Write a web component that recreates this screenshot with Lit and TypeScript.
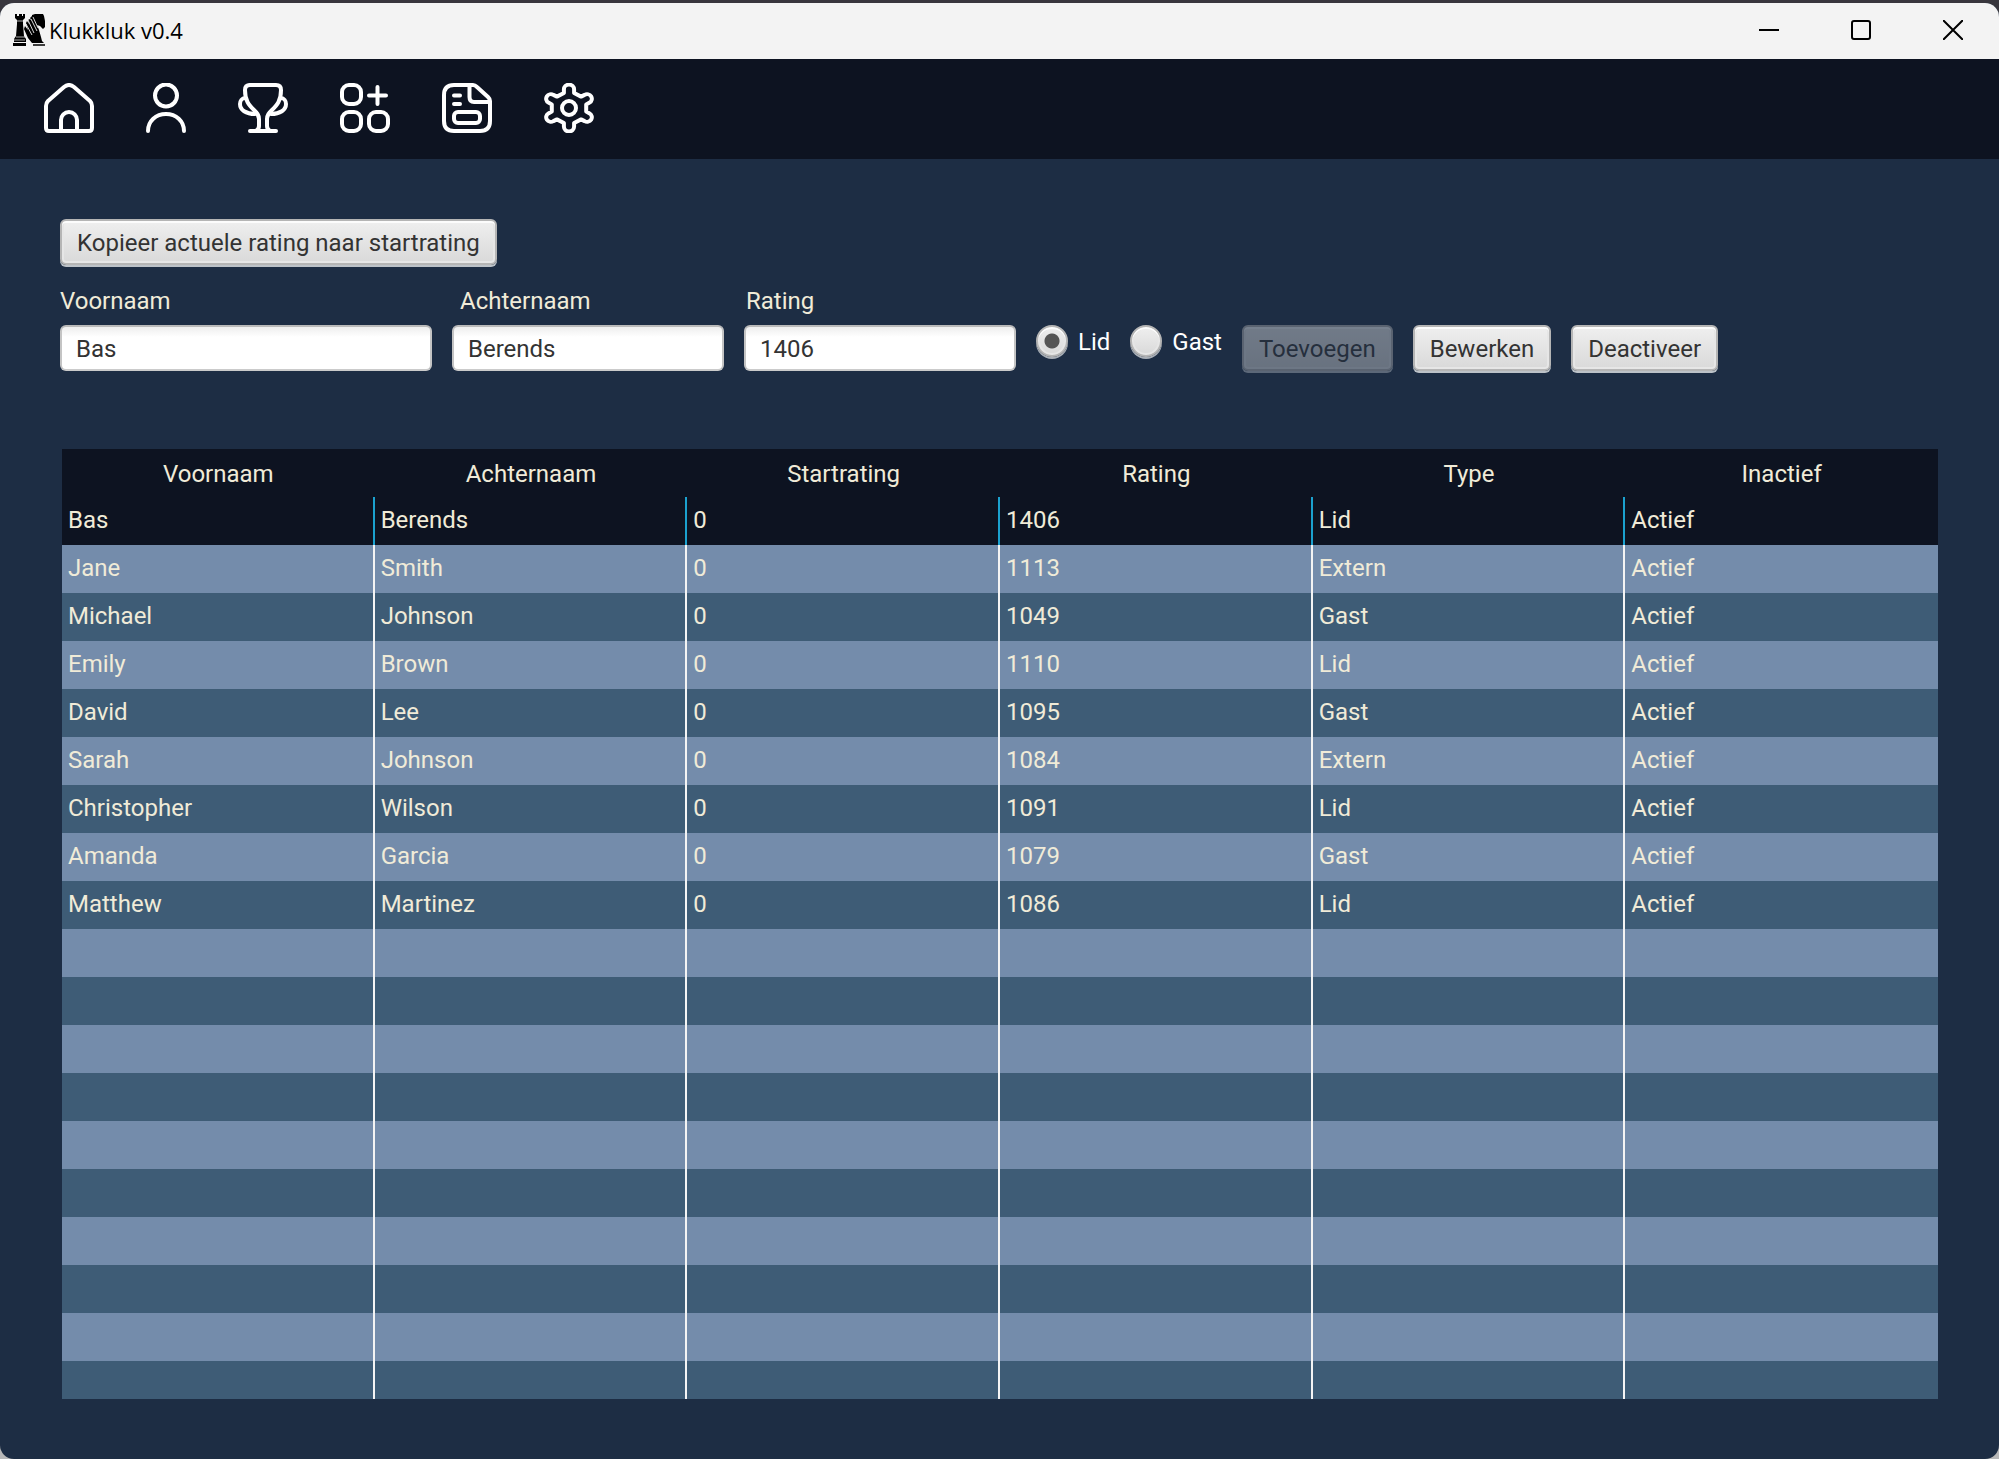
import { LitElement, html, svg, css, nothing } from "lit";
import { customElement, property, state } from "lit/decorators.js";
import { classMap } from "lit/directives/class-map.js";

interface Player {
  first: string;
  last: string;
  start: number;
  rating: number;
  type: string;
  status: string;
}

const player = (first: string, last: string, rating: number, type: string): Player => ({
  first,
  last,
  start: 0,
  rating,
  type,
  status: "Actief",
});

const PLAYERS: Player[] = [
  player("Bas", "Berends", 1406, "Lid"),
  player("Jane", "Smith", 1113, "Extern"),
  player("Michael", "Johnson", 1049, "Gast"),
  player("Emily", "Brown", 1110, "Lid"),
  player("David", "Lee", 1095, "Gast"),
  player("Sarah", "Johnson", 1084, "Extern"),
  player("Christopher", "Wilson", 1091, "Lid"),
  player("Amanda", "Garcia", 1079, "Gast"),
  player("Matthew", "Martinez", 1086, "Lid"),
];

const COLUMNS = ["Voornaam", "Achternaam", "Startrating", "Rating", "Type", "Inactief"];

/** Outline of a six-lobed cog centred on (25, 25). */
function cogPath(): string {
  const turn = (x: number, y: number, i: number) => {
    const a = (i * Math.PI) / 3;
    const px = 25 + 1.13 * (x * Math.cos(a) - y * Math.sin(a));
    const py = 25 + (x * Math.sin(a) + y * Math.cos(a));
    return `${px.toFixed(1)} ${py.toFixed(1)}`;
  };
  let d = "";
  for (let i = 0; i < 6; i++) {
    d += `${i ? "L" : "M"}${turn(-4.5, -15, i)} L${turn(-4.5, -18.5, i)} `;
    d += `A4.7 4.5 0 0 1 ${turn(4.5, -18.5, i)} L${turn(4.5, -15, i)} `;
  }
  return d + "Z";
}

const NAV = [
  {
    label: "Home",
    width: 50,
    art: svg`<path d="M2 45V23Q2 20 4 18L20 4Q25 0 30 4L46 18Q48 20 48 23V45Q48 48 45 48H5Q2 48 2 45Z"/>
      <path d="M17 48V37A8 8 0 0 1 33 37V48"/>`,
  },
  {
    label: "Spelers",
    width: 40,
    art: svg`<circle cx="20" cy="12.500" r="11"/><path d="M2 48C2 38 10 31 20 31S38 38 38 48"/>`,
  },
  {
    label: "Toernooien",
    width: 50,
    art: svg`<path d="M12 2H38Q43 2 43 7C43 18 39 22 34 27C31 30 29 32 29 36V43Q29 46 32 48"/>
      <path d="M12 2Q7 2 7 7C7 18 11 22 16 27C19 30 21 32 21 36V43Q21 46 18 48"/>
      <path d="M12 48H38"/>
      <path d="M7 15C4 15 2 18 2 21C2 27 8 31 17 31M43 15C46 15 48 18 48 21C48 27 42 31 33 31"/>`,
  },
  {
    label: "Groepen",
    width: 50,
    art: svg`<rect x="2" y="2" width="19" height="19" rx="7"/>
      <rect x="2" y="29" width="19" height="19" rx="7"/>
      <rect x="29" y="29" width="19" height="19" rx="7"/>
      <path d="M37.500 4V21M29 12.500H46"/>`,
  },
  {
    label: "Rapporten",
    width: 50,
    art: svg`<path d="M12 2H31Q33 2 35 4L46 14Q48 16 48 18V38Q48 48 38 48H12Q2 48 2 38V12Q2 2 12 2Z"/>
      <path d="M27.500 3V14Q27.500 19 32 19H47"/>
      <path d="M12 12.500H18M12 21H18"/>
      <rect x="12" y="29" width="26" height="11" rx="4"/>`,
  },
  {
    label: "Instellingen",
    width: 50,
    art: svg`<path d=${cogPath()}/><circle cx="25" cy="25" r="7"/>`,
  },
];

@customElement("title-bar")
export class TitleBar extends LitElement {
  static styles = css`
    :host {
      display: flex;
      align-items: stretch;
      box-sizing: border-box;
      height: 56px;
      padding-bottom: 2px;
      background: #f3f3f3;
      color: #000;
      font-family: "Open Sans", "Noto Sans", sans-serif;
    }
    .brand {
      flex: 1;
      display: flex;
      align-items: center;
      gap: 4px;
      padding-left: 13px;
      font-size: 22px;
      line-height: 32px;
    }
    .logo {
      display: block;
      width: 32px;
      height: 32px;
    }
    .control {
      display: grid;
      place-items: center;
      width: 92px;
      padding: 0;
      border: 0;
      background: none;
    }
    .glyph {
      width: 20px;
      height: 20px;
      fill: none;
      stroke: #000;
      stroke-width: 2;
    }
  `;

  render() {
    return html`
      <div class="brand">
        <svg class="logo" viewBox="0 0 32 32" aria-hidden="true">
          <path d="M2 0h2v2h2V0h3v2h1V0h2v4l-2 2v4l1 12 2 3v3H1v-3l2-3 1-12V6L2 4Z" />
          <path d="M0 29h13v3H0Z" />
          <path d="M3 7h8M3 23h9M1 26h11" stroke="#f3f3f3" stroke-width=".700" />
          <path
            d="M19 1l3-1h8l1 2 1 5v6l-2 2-3-3-3-1 2 5 2 7 1 4 2 2H19l-4-5-4-9 1-3 3 4-2-7 1-2 2 3-1-4 2-1 2 2-2-3 2-2Z"
          />
          <path d="M20 31h12" stroke="#000" stroke-width="1.500" />
          <path
            d="M15 6l6 13M18 5l6 12M20 3l5 11M13 10l6 11"
            stroke="#f3f3f3"
            stroke-width=".900"
            fill="none"
          />
        </svg>
        <span>Klukkluk v0.4</span>
      </div>
      <button class="control" aria-label="Minimaliseren">
        <svg class="glyph" viewBox="0 0 20 20"><path d="M0 10H20" /></svg>
      </button>
      <button class="control" aria-label="Maximaliseren">
        <svg class="glyph" viewBox="0 0 20 20"><rect x="1" y="1" width="18" height="18" rx="2" /></svg>
      </button>
      <button class="control" aria-label="Sluiten">
        <svg class="glyph" viewBox="0 0 20 20"><path d="M0 0L20 20M20 0L0 20" /></svg>
      </button>
    `;
  }
}

@customElement("nav-bar")
export class NavBar extends LitElement {
  static styles = css`
    :host {
      display: block;
      background: #0d1321;
    }
    .items {
      display: flex;
      gap: 52px;
      padding: 24px 44px 26px;
    }
    .item {
      display: block;
      padding: 0;
      border: 0;
      background: none;
    }
    .icon {
      display: block;
      fill: none;
      stroke: #fff;
      stroke-width: 4;
      stroke-linecap: round;
      stroke-linejoin: round;
    }
  `;

  render() {
    return html`<nav class="items">
      ${NAV.map(
        (n) => html`<button class="item" aria-label=${n.label}>
          <svg class="icon" width=${n.width} height="50" viewBox="0 0 ${n.width} 50">${n.art}</svg>
        </button>`,
      )}
    </nav>`;
  }
}

@customElement("player-form")
export class PlayerForm extends LitElement {
  @property({ attribute: false }) player: Player = PLAYERS[0];

  static styles = css`
    :host {
      display: flex;
      flex-direction: column;
      align-items: flex-start;
    }
    .button,
    .input {
      box-sizing: border-box;
      height: 46px;
      border: 2px solid #b5b5b5;
      border-radius: 6px;
      color: #333;
      font: inherit;
      line-height: 24px;
    }
    .button {
      padding: 2px 15px 0;
      background: linear-gradient(#efefef, #d9d9d9);
      box-shadow:
        0 2px 0 #bcc2c8,
        inset 0 2px 0 #fcfcfc,
        inset 0 0 0 2px #e6e6e6;
      white-space: nowrap;
    }
    .button:disabled {
      opacity: 0.4;
    }
    .input {
      margin: 0;
      padding: 2px 14px 0;
      background: linear-gradient(#eee, #fff 10px);
      border-color: #bababa #c4c4c4 #cbcbcb;
    }
    .wide {
      width: 372px;
    }
    .medium {
      width: 272px;
    }
    .labels {
      display: grid;
      grid-template-columns: 400px 286px auto;
      margin: 20px 0 8px;
      color: #f0ebd8;
      line-height: 32px;
    }
    .row {
      display: flex;
      align-items: flex-start;
      gap: 20px;
    }
    .choice {
      display: flex;
      align-items: flex-start;
      gap: 10px;
      line-height: 34px;
      color: #fff;
    }
    .radio {
      appearance: none;
      box-sizing: border-box;
      width: 32px;
      height: 32px;
      margin: 0;
      border: 2px solid #b5b5b5;
      border-radius: 50%;
      background: linear-gradient(#efefef, #d9d9d9);
      box-shadow:
        0 2px 0 #a9afb7,
        inset 0 2px 0 #fcfcfc,
        inset 0 0 0 2px #e6e6e6;
    }
    .radio:checked {
      background:
        radial-gradient(circle, #555 7px, transparent 8px),
        linear-gradient(#efefef, #d9d9d9);
    }
  `;

  render() {
    const p = this.player;
    return html`
      <button class="button">Kopieer actuele rating naar startrating</button>
      <div class="labels">
        <label for="first">Voornaam</label>
        <label for="last">Achternaam</label>
        <label for="rating">Rating</label>
      </div>
      <div class="row">
        <input class="input wide" id="first" type="text" .value=${p.first} />
        <input class="input medium" id="last" type="text" .value=${p.last} />
        <input class="input medium" id="rating" type="text" .value=${String(p.rating)} />
        ${["Lid", "Gast"].map(
          (t) => html`<label class="choice"
            ><input class="radio" type="radio" name="type" value=${t} .checked=${p.type === t} />${t}</label
          >`,
        )}
        <button class="button" disabled>Toevoegen</button>
        <button class="button">Bewerken</button>
        <button class="button">Deactiveer</button>
      </div>
    `;
  }
}

@customElement("player-table")
export class PlayerTable extends LitElement {
  @property({ attribute: false }) selected: Player = PLAYERS[0];

  static styles = css`
    :host {
      display: block;
      overflow: hidden;
      color: #f0ebd8;
    }
    .table {
      width: 100%;
      table-layout: fixed;
      border-collapse: separate;
      border-spacing: 0;
    }
    .head {
      box-sizing: border-box;
      height: 48px;
      padding: 2px 0 0;
      background: #0d1321;
      font-weight: 400;
      text-align: center;
    }
    .line {
      background: #3e5c76;
    }
    .line:nth-child(even) {
      background: #748cab;
    }
    .line.selected {
      background: #0d1321;
    }
    .cell {
      box-sizing: border-box;
      height: 48px;
      padding: 0 6px 2px;
      border-right: 2px solid #f4f4f4;
    }
    .selected .cell {
      border-right-color: #1ba1cf;
    }
    .line .cell:last-child {
      border-right: 0;
    }
  `;

  private pick(p: Player) {
    this.dispatchEvent(new CustomEvent("pick", { detail: p }));
  }

  render() {
    return html`<table class="table">
      <thead>
        <tr>
          ${COLUMNS.map((c) => html`<th class="head" scope="col">${c}</th>`)}
        </tr>
      </thead>
      <tbody>
        ${PLAYERS.map(
          (p) => html`<tr
            class=${classMap({ line: true, selected: p === this.selected })}
            @click=${() => this.pick(p)}
          >
            ${[p.first, p.last, p.start, p.rating, p.type, p.status].map(
              (v) => html`<td class="cell">${v}</td>`,
            )}
          </tr>`,
        )}
        ${Array.from(
          { length: 10 },
          () => html`<tr class="line">
            ${COLUMNS.map(() => html`<td class="cell">${nothing}</td>`)}
          </tr>`,
        )}
      </tbody>
    </table>`;
  }
}

@customElement("app-root")
export class AppRoot extends LitElement {
  @state() private selected: Player = PLAYERS[0];

  static styles = css`
    :host {
      display: block;
      box-sizing: border-box;
      height: 100vh;
      padding-top: 3px;
      background: linear-gradient(#38363d 50%, #b8b8b8 50%);
      font-family: Roboto, "Liberation Sans", sans-serif;
      font-size: 24px;
      line-height: 32px;
    }
    .window {
      display: flex;
      flex-direction: column;
      height: 100%;
      overflow: hidden;
      border-radius: 14px;
      background: #1d2d44;
    }
    .content {
      flex: 1;
      min-height: 0;
      display: flex;
      flex-direction: column;
      gap: 78px;
      padding: 60px;
    }
    .players {
      flex: 1;
      min-height: 0;
      margin: 0 1px 0 2px;
    }
  `;

  render() {
    return html`<div class="window">
      <title-bar></title-bar>
      <nav-bar></nav-bar>
      <main class="content">
        <player-form .player=${this.selected}></player-form>
        <player-table
          class="players"
          .selected=${this.selected}
          @pick=${(e: CustomEvent<Player>) => (this.selected = e.detail)}
        ></player-table>
      </main>
    </div>`;
  }
}
